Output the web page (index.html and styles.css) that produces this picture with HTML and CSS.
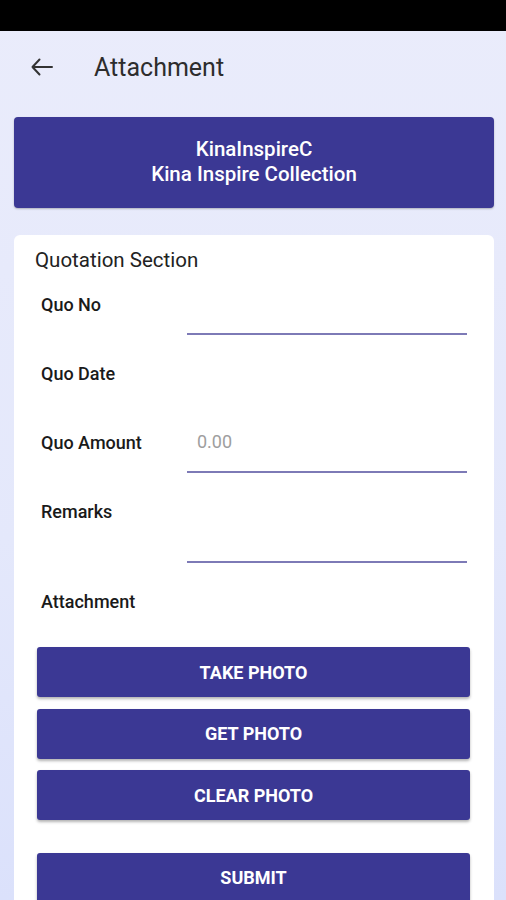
FILE: index.html
```html
<!DOCTYPE html>
<html>
<head>
<meta charset="utf-8">
<link rel="stylesheet" href="styles.css">
</head>
<body>
<div class="status"></div>
<div class="toolbar">
  <svg class="back" viewBox="0 0 24 24" width="24" height="24"><path d="M22 12H2.5M9.5 4.5L2.5 12l7 7.5" fill="none" stroke="#333" stroke-width="2" stroke-linecap="round" stroke-linejoin="round"/></svg>
  <div class="title">Attachment</div>
</div>
<div class="header-card">
  <div>KinaInspireC</div>
  <div>Kina Inspire Collection</div>
</div>
<div class="card">
  <div class="section-title">Quotation Section</div>
  <div class="rows">
    <div class="row">
      <div class="label">Quo No</div>
      <div class="field line"></div>
    </div>
    <div class="row">
      <div class="label">Quo Date</div>
      <div class="field"></div>
    </div>
    <div class="row">
      <div class="label">Quo Amount</div>
      <div class="field line"><span class="ph">0.00</span></div>
    </div>
    <div class="row">
      <div class="label">Remarks</div>
      <div class="field line tall"></div>
    </div>
    <div class="row short">
      <div class="label">Attachment</div>
    </div>
  </div>
  <div class="buttons">
    <button class="btn">TAKE PHOTO</button>
    <button class="btn">GET PHOTO</button>
    <button class="btn">CLEAR PHOTO</button>
    <button class="btn submit">SUBMIT</button>
  </div>
</div>
</body>
</html>
```

FILE: styles.css
```css
html, body {
  margin: 0;
  padding: 0;
}
body {
  width: 506px;
  height: 900px;
  overflow: hidden;
  font-family: Roboto, "Noto Sans", sans-serif;
  background: linear-gradient(180deg, #eaecfb 0%, #e4e8fb 60%, #dbe1fb 100%);
}
.status {
  height: 31px;
  background: #000;
}
.toolbar {
  height: 72px;
  display: flex;
  align-items: center;
  padding-left: 30px;
  gap: 40px;
}
.back {
  display: block;
}
.title {
  font-size: 25px;
  color: #2d2d2d;
  line-height: 30px;
  margin-top: 2px;
}
.header-card {
  margin: 14px 12px 0 14px;
  height: 91px;
  background: #3b3894;
  border-radius: 4px;
  box-shadow: 0 1px 2px rgba(0,0,0,0.25);
  color: #fff;
  font-size: 20.5px;
  font-weight: 500;
  line-height: 25px;
  display: flex;
  flex-direction: column;
  align-items: center;
  justify-content: center;
  box-sizing: border-box;
  padding-bottom: 2px;
}
.card {
  margin: 27px 12px 0 14px;
  background: #fff;
  border-radius: 6px;
  height: 700px;
  padding: 13px 24px 0 21px;
  box-sizing: border-box;
}
.section-title {
  font-size: 20.5px;
  line-height: 24px;
  color: #222;
}
.rows {
  margin-top: 13px;
  padding-left: 6px;
  padding-right: 3px;
  display: flex;
  flex-direction: column;
  gap: 19px;
}
.row {
  display: flex;
  align-items: flex-start;
}
.label {
  width: 146px;
  flex: none;
  margin-top: 10px;
  font-size: 18px;
  line-height: 20px;
  font-weight: 500;
  color: #1a1a1a;
}
.field {
  flex: 1;
  height: 50px;
  box-sizing: border-box;
}
.field.line {
  border-bottom: 2px solid #7d7ab6;
}
.field.tall {
  height: 71px;
}
.row.short {
  height: 40px;
}
.ph {
  display: block;
  margin-left: 10px;
  margin-top: 9px;
  font-size: 18px;
  line-height: 20px;
  color: #9e9e9e;
}
.buttons {
  margin-top: 25px;
  padding-left: 2px;
  display: flex;
  flex-direction: column;
  gap: 11.5px;
}
.btn {
  height: 50px;
  border: none;
  border-radius: 3px;
  background: #3b3894;
  color: #fff;
  font-family: Roboto, "Noto Sans", sans-serif;
  font-size: 18px;
  font-weight: 700;
  box-shadow: 0 2px 3px rgba(0,0,0,0.3);
  padding: 0;
}
.btn.submit {
  margin-top: 21px;
}
```
